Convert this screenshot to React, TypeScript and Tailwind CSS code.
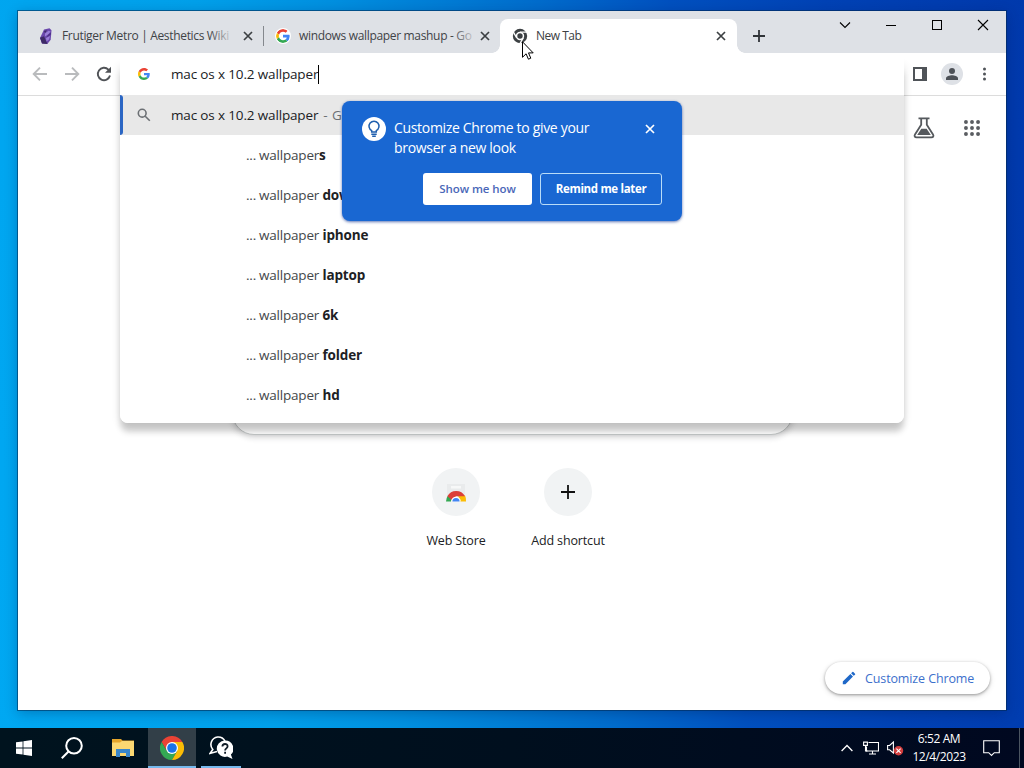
import type { ReactNode } from "react";
import clsx from "clsx";

const suggestions = [
  { text: "wallpaper", bold: "s" },
  { text: "wallpaper ", bold: "download" },
  { text: "wallpaper ", bold: "iphone" },
  { text: "wallpaper ", bold: "laptop" },
  { text: "wallpaper ", bold: "6k" },
  { text: "wallpaper ", bold: "folder" },
  { text: "wallpaper ", bold: "hd" },
];

function GoogleIcon({ className }: { className?: string }) {
  return (
    <svg viewBox="0 0 48 48" className={className}>
      <path fill="#ea4335" d="M24 9.5c3.54 0 6.71 1.22 9.21 3.6l6.85-6.85C35.9 2.38 30.47 0 24 0 14.62 0 6.51 5.38 2.56 13.22l7.98 6.19C12.43 13.72 17.74 9.5 24 9.5z" />
      <path fill="#4285f4" d="M46.98 24.55c0-1.57-.15-3.09-.38-4.55H24v9.02h12.94c-.58 2.96-2.26 5.48-4.78 7.18l7.73 6c4.51-4.18 7.09-10.36 7.09-17.65z" />
      <path fill="#fbbc05" d="M10.53 28.59A14.5 14.5 0 0 1 9.77 24c0-1.6.27-3.14.76-4.59l-7.98-6.19A23.9 23.9 0 0 0 0 24c0 3.87.92 7.53 2.56 10.78l7.97-6.19z" />
      <path fill="#34a853" d="M24 48c6.48 0 11.93-2.13 15.89-5.81l-7.73-6c-2.15 1.45-4.92 2.3-8.16 2.3-6.26 0-11.57-4.22-13.47-9.91l-7.98 6.19C6.51 42.62 14.62 48 24 48z" />
    </svg>
  );
}

function FrutigerIcon() {
  return (
    <svg viewBox="0 0 16 16" className="size-4">
      <path fill="#6a48ac" d="M6 1.5 11.5.3l2 1.9-.8 9.6-3.4 4.2-5.3-.4L2 10z" />
      <path fill="#3d2a66" d="m2 9.8 4-1.6 3.5 7.8-5.5-.4zM6 3l3-.7-2 3z" />
      <path fill="#9a7fd8" d="m7 5.5 3.6-2.7 2 .6-2.2 2.9L7 8.5zM8 10l4-2-1 3.6-2.5 1.8z" />
      <path fill="#4d3088" d="m10 6.8 3-2.2-.3 2.2-4.2 2.6z" />
    </svg>
  );
}

function GrayChromeIcon() {
  return (
    <svg viewBox="0 0 16 16" className="size-4">
      <circle cx="8" cy="8" r="7.2" fill="#3c4043" />
      <g stroke="#fff" strokeWidth="1.3">
        <path d="M8 4.2h7.5M4.7 9.9 1 3.4M11.3 9.9 7.6 16.2" />
      </g>
      <circle cx="8" cy="8" r="4.2" fill="#fff" />
      <circle cx="8" cy="8" r="2.7" fill="#3c4043" />
    </svg>
  );
}

function ChromeIcon() {
  return (
    <svg viewBox="0 0 24 24" className="size-6">
      <path fill="#ea4335" d="M12 6h10.4A12 12 0 0 0 1.6 6l5.2 9z" />
      <path fill="#34a853" d="M1.6 6A12 12 0 0 0 12 24l5.2-9L12 12l-5.2 3z" />
      <path fill="#fbbc05" d="M12 24A12 12 0 0 0 22.4 6H12l5.2 9z" />
      <circle cx="12" cy="12" r="6" fill="#fff" />
      <circle cx="12" cy="12" r="4.8" fill="#1a73e8" />
    </svg>
  );
}

function CloseIcon({ className }: { className?: string }) {
  return (
    <svg viewBox="0 0 10 10" className={clsx("size-2.5 shrink-0", className)} fill="none" stroke="currentColor" strokeWidth="1.7">
      <path d="m1 1 8 8M9 1 1 9" />
    </svg>
  );
}

function Tab({ icon, title, className }: { icon: ReactNode; title: string; className?: string }) {
  return (
    <div className={clsx("relative flex h-[34px] items-center pr-[10px]", className)}>
      {icon}
      <div className="relative ml-2 whitespace-nowrap text-[12px] tracking-[-0.33px] text-[#3f4347]">
        {title}
        <div className="absolute inset-y-0 right-0 w-5 bg-linear-to-r from-[#dee1e6]/0 to-[#dee1e6]/80" />
      </div>
      <CloseIcon className="ml-auto text-[#3c4043]" />
    </div>
  );
}

function WindowButton({ children }: { children: ReactNode }) {
  return (
    <div className="flex w-[46px] justify-center">
      <svg viewBox="0 0 12 12" className="size-3" fill="none" stroke="#000" strokeWidth="1.1">
        {children}
      </svg>
    </div>
  );
}

function TabStrip() {
  return (
    <div className="flex h-[42px] bg-[#dee1e6] pl-2 pt-2">
      <Tab icon={<FrutigerIcon />} title="Frutiger Metro | Aesthetics Wiki" className="w-[237px] pl-3" />
      <div className="mt-[7px] h-5 w-px bg-[#84888d]" />
      <Tab
        icon={<GoogleIcon className="mx-px size-3.5 rounded-full bg-white ring-1 ring-white" />}
        title="windows wallpaper mashup - Go"
        className="w-[236px] pl-[11px]"
      />
      <div className="relative flex h-[34px] w-[237px] items-center rounded-t-lg bg-white pl-3 pr-[11px]">
        <GrayChromeIcon />
        <span className="ml-2 text-[12px] tracking-[-0.5px] text-[#3c4043]">New Tab</span>
        <CloseIcon className="ml-auto text-[#3c4043]" />
        <div className="absolute -left-2 bottom-0 size-2 bg-[radial-gradient(circle_at_0_0,transparent_7.5px,white_8px)]" />
        <div className="absolute -right-2 bottom-0 size-2 bg-[radial-gradient(circle_at_100%_0,transparent_7.5px,white_8px)]" />
      </div>
      <svg viewBox="0 0 12 12" className="ml-4 mt-[11px] size-3 text-[#303438]" stroke="currentColor" strokeWidth="1.8">
        <path d="M6 0v12M0 6h12" />
      </svg>
      <div className="ml-auto flex h-3">
        <WindowButton><path d="m1 3.5 5 5 5-5" /></WindowButton>
        <WindowButton><path d="M1 6.5h10" shapeRendering="crispEdges" /></WindowButton>
        <WindowButton><path d="M1.5 1.5h9v9h-9z" shapeRendering="crispEdges" /></WindowButton>
        <WindowButton><path d="m1 1 10 10M11 1 1 11" /></WindowButton>
      </div>
    </div>
  );
}

function Toolbar() {
  return (
    <div className="flex h-[43px] items-center border-b border-[#dcdcdc] bg-white">
      <div className="flex items-center gap-4 pl-[14px]">
        <svg viewBox="0 0 16 16" className="size-4" fill="none" stroke="#b9bbbd" strokeWidth="1.9">
          <path d="M15 8H2.2M8 1.7 1.7 8 8 14.3" />
        </svg>
        <svg viewBox="0 0 16 16" className="size-4" fill="none" stroke="#b9bbbd" strokeWidth="1.9">
          <path d="M1 8h12.8M8 1.7 14.3 8 8 14.3" />
        </svg>
        <svg viewBox="0 0 16 16" className="size-4" fill="none" stroke="#505357" strokeWidth="1.9">
          <path d="M14 9.6A6.2 6.2 0 1 1 12.4 3.6L14 5.2" />
          <path d="M15 .8v6H9z" fill="#505357" stroke="none" />
        </svg>
      </div>
      <div className="ml-auto flex items-center pr-[14px]">
        <svg viewBox="0 0 14 14" className="size-3.5">
          <path fill="#4f5358" fillRule="evenodd" d="M0 0h14v14H0zm2 2v10h7V2z" />
        </svg>
        <div className="ml-[14px] flex size-[22px] items-center justify-center rounded-full bg-[#dee1e6]">
          <svg viewBox="0 0 12 12" className="size-3" fill="#4d5157">
            <circle cx="6" cy="3" r="3" />
            <path d="M0 12V10.3C0 8.2 3.6 7.3 6 7.3s6 .9 6 3V12z" />
          </svg>
        </div>
        <svg viewBox="0 0 14 14" className="ml-[15px] size-3.5" fill="#4f5358">
          <circle cx="6.5" cy="2" r="1.5" />
          <circle cx="6.5" cy="7" r="1.5" />
          <circle cx="6.5" cy="12" r="1.5" />
        </svg>
      </div>
    </div>
  );
}

function Omnibox() {
  return (
    <div className="absolute left-[102px] top-[42px] h-[370px] w-[784px] overflow-hidden rounded-b-lg bg-white text-[13.5px] tracking-[-0.15px] text-[#202124]">
      <div className="flex h-[42px] items-center pl-[18px]">
        <GoogleIcon className="size-3" />
        <span className="ml-[21px]">mac os x 10.2 wallpaper</span>
        <span className="h-[19px] w-px bg-black" />
      </div>
      <div className="flex h-10 items-center bg-[#e8e8e8]">
        <div className="h-full w-[3px] rounded-r bg-[#2b66c4]" />
        <svg viewBox="0 0 14 14" className="ml-[14px] size-3.5" fill="none" stroke="#6c7074" strokeWidth="1.6">
          <circle cx="5.2" cy="5.2" r="3.9" />
          <path d="m8.2 8.2 4.6 4.6" />
        </svg>
        <span className="ml-5">mac os x 10.2 wallpaper</span>
        <span className="whitespace-pre pl-px tracking-[0.5px] text-[#6a6e73]"> - Google Search</span>
      </div>
      {suggestions.map((item) => (
        <div key={item.bold} className="flex h-10 items-center whitespace-pre pl-[126px] tracking-[-0.2px]">
          <span className="w-[13px] text-[#44474a]">...</span>
          <span className="text-[#44474a]">{item.text}</span>
          <span className="font-bold tracking-[-0.12px]">{item.bold}</span>
        </div>
      ))}
    </div>
  );
}

function NewTabPage() {
  return (
    <div className="relative flex flex-1 flex-col items-center bg-white">
      <div className="flex w-full justify-end gap-[29px] pr-[26px] pt-[21px]">
        <svg viewBox="0 0 22 22" className="size-[22px]" fill="none" stroke="#55595d" strokeWidth="1.8">
          <path d="M5.5 1.4h11M8.2 1.4v6.4L2 17.4c-1 1.7-.2 3 1.6 3h14.8c1.8 0 2.6-1.3 1.6-3l-6.2-9.6V1.4" />
          <path d="M8.3 11.8h5.4l4.1 6.3H4.2z" fill="#55595d" stroke="none" />
        </svg>
        <svg viewBox="0 0 18 18" className="mt-[3px] size-4" fill="#5a5d61">
          {[2.2, 9, 15.8].map((y) => [2.2, 9, 15.8].map((x) => <circle key={`${x}-${y}`} cx={x} cy={y} r="2.2" />))}
        </svg>
      </div>
      <div className="mt-[252px] h-11 w-[561px] rounded-full border border-[#c2c6c6] bg-white shadow-[0_2px_6px_rgba(32,33,36,0.22)]" />
      <div className="mt-[33px] flex text-[12.5px] text-[#202124]">
        <div className="flex w-28 flex-col items-center">
          <div className="flex size-12 items-center justify-center rounded-full bg-[#f1f3f4] pt-1">
            <svg viewBox="0 0 24 24" className="size-6">
              <path fill="#e9ebec" d="M3 2h18v17H3z" />
              <path fill="#f7f8f8" d="M7 4h10v2.5H7z" />
              <path fill="#34a853" d="M2 19.5a10 10 0 0 1 2-6l4 2-1 4z" />
              <path fill="#fbbc05" d="M14 13.5h7a10 10 0 0 1 1 6h-6z" />
              <path fill="#dc3f38" d="M3.4 14.2a10 10 0 0 1 17.6 0h-9l-4 4z" />
              <path fill="#fff" d="M7.2 19.5a4.8 4.8 0 0 1 9.6 0z" />
              <path fill="#4285f4" d="M8.4 19.5a3.6 3.6 0 0 1 7.2 0z" />
            </svg>
          </div>
          <span className="mt-4 tracking-[-0.15px]">Web Store</span>
        </div>
        <div className="flex w-28 flex-col items-center">
          <div className="flex size-12 items-center justify-center rounded-full bg-[#f1f3f4]">
            <svg viewBox="0 0 14 14" className="size-3.5" stroke="#111" strokeWidth="1.8">
              <path d="M7 0v14M0 7h14" />
            </svg>
          </div>
          <span className="mt-4 tracking-[-0.15px]">Add shortcut</span>
        </div>
      </div>
      <button className="absolute bottom-4 right-4 flex h-8 w-[165px] items-center rounded-full bg-white pl-[17px] text-[12.5px] tracking-[-0.12px] text-[#3c70cc] shadow-[0_1px_3px_rgba(0,0,0,0.35),0_2px_6px_rgba(0,0,0,0.12)]">
        <svg viewBox="0 0 14 14" className="size-3.5" fill="#1f68c8">
          <path d="M.8 10.6v2.6h2.6l7.6-7.6L8.4 3zM13 3.7a.7.7 0 0 0 0-1L11.4 1a.7.7 0 0 0-1 0L9.1 2.2l2.6 2.6z" />
        </svg>
        <span className="ml-[9px] mt-[3px] whitespace-nowrap">Customize Chrome</span>
      </button>
    </div>
  );
}

function CustomizePromo() {
  return (
    <div className="absolute left-[324px] top-[90px] h-[120px] w-[340px] rounded-lg bg-[#1967d2] pl-5 pr-5 pt-4 text-white shadow-[0_1px_3px_rgba(25,60,150,0.7)]">
      <div className="flex">
        <div className="flex size-6 items-center justify-center rounded-full bg-white">
          <svg viewBox="0 0 16 18" className="h-[18px] w-4" fill="none" stroke="#1f5fae" strokeWidth="1.5">
            <path d="M5.7 12v-1.4a5 5 0 1 1 4.6 0V12z" />
            <path d="M5.3 14.2h5.4M6.2 16.3h3.6" />
          </svg>
        </div>
        <p className="ml-2 mt-px w-[220px] text-[14px] leading-5 tracking-[-0.32px]">
          Customize Chrome to give your
          <br />
          browser a new look
        </p>
        <CloseIcon className="ml-auto mr-[7px] mt-[7px]" />
      </div>
      <div className="mt-[15px] flex justify-end gap-2 text-[11.5px]">
        <button className="h-8 w-[109px] rounded-[3px] bg-white font-semibold tracking-[-0.08px] text-[#4a67b8]">Show me how</button>
        <button className="h-8 w-[122px] rounded-[3px] border border-[#b9dcf8] font-bold tracking-[-0.33px]">Remind me later</button>
      </div>
    </div>
  );
}

function Taskbar() {
  return (
    <div className="flex h-10 bg-linear-to-r from-[#00131e] via-[#000f1e] to-[#000820] text-white">
      <div className="flex w-12 items-center justify-center">
        <svg viewBox="0 0 16 16" className="size-4" fill="#fff">
          <path d="M0 2.3 6.6 1.4v6.1H0zM7.4 1.3 16 0v7.5H7.4zM0 8.4h6.6v6.2L0 13.7zM7.4 8.4H16V16l-8.6-1.3z" />
        </svg>
      </div>
      <div className="flex w-12 items-center justify-center">
        <svg viewBox="0 0 22 22" className="size-[22px]" fill="none" stroke="#fff" strokeWidth="2">
          <circle cx="13" cy="8.8" r="7.8" />
          <path d="M7.5 14.5.8 21.2" />
        </svg>
      </div>
      <div className="flex w-[52px] items-center justify-center pl-0.5">
        <svg viewBox="0 0 22 18" className="mb-px h-[18px] w-[22px]">
          <path fill="#e5a52b" d="M0 0h9l1.5 1.5H22V17H0z" />
          <path fill="#fcd872" d="M0 3.5h8L10 2h12v15H0z" />
          <path fill="#3a87cb" d="M4 10h14v8h-4v-4H8v4H4z" />
        </svg>
      </div>
      <div className="flex w-12 flex-col items-center border-b-2 border-[#76b9ed] bg-[#323f48] pt-2">
        <ChromeIcon />
      </div>
      <div className="ml-[5px] flex w-10 flex-col items-center border-b-2 border-[#76b9ed] pt-2">
        <svg viewBox="0 0 24 24" className="size-6">
          <path fill="none" stroke="#fff" strokeWidth="1.6" d="M8 15.5 1 17.5l2.8-4A7.6 7.6 0 0 1 8.6 1a7.6 7.6 0 0 1 7.3 4" />
          <path fill="#fff" d="M16 4.5a8.2 8.2 0 1 0 2.2 16.1L23.5 23l-1.6-4.4A8.2 8.2 0 0 0 16 4.5z" />
          <path fill="none" stroke="#111d28" strokeWidth="1.8" d="M13.4 10.5c0-3.3 5.2-3.3 5.2-.2 0 2-2.5 2.1-2.5 4.1M16.1 15.7v2" />
        </svg>
      </div>
      <div className="ml-auto flex items-center">
        <svg viewBox="0 0 12 8" className="h-2 w-3" fill="none" stroke="#fff" strokeWidth="1.3">
          <path d="M.6 7 6 1.5 11.4 7" />
        </svg>
        <svg viewBox="0 0 16 14" className="ml-[10px] h-3.5 w-4" fill="none" stroke="#fff" strokeWidth="1.1">
          <path d="M5.5 1.5h10v8.5h-12V5.5M9.5 10v3M6 13h7" />
          <path d="M.6 1.1h3.8v3.3H.6zM2.5 4.5V10h2" />
        </svg>
        <svg viewBox="0 0 18 16" className="ml-2 h-4 w-[18px]">
          <path fill="none" stroke="#fff" strokeWidth="1.1" d="M.6 5.5h2L6.4 2v11L2.6 9.8h-2z" />
          <circle cx="11.5" cy="10.7" r="4.7" fill="#d13d3d" />
          <path stroke="#fff" strokeWidth="1.1" d="m9.4 8.6 4.2 4.2m0-4.2-4.2 4.2" />
        </svg>
        <div className="ml-[5px] flex w-[58px] flex-col items-center whitespace-nowrap text-[12px] leading-[18px] tracking-[-0.4px]">
          <span>6:52 AM</span>
          <span>12/4/2023</span>
        </div>
        <svg viewBox="0 0 17 17" className="ml-[15px] size-[17px]" fill="none" stroke="#fff" strokeWidth="1.1">
          <path d="M.7.7h15.6v12h-5L8.5 15.5l-2.8-2.8h-5z" />
        </svg>
        <div className="ml-[19px] mr-1 h-full w-px bg-[#4b5561]" />
      </div>
    </div>
  );
}

export default function App() {
  return (
    <div className="relative flex h-[768px] w-[1024px] flex-col overflow-hidden bg-[linear-gradient(84deg,#00a8f2_0%,#00a0ea_25%,#0090e0_37%,#006ccc_56%,#0050bf_68%,#0042b5_82%,#0039ac_100%)] font-['Open_Sans','Noto_Sans',sans-serif]">
      <div className="flex h-[728px] pl-[18px] pt-[11px]">
        <div className="relative flex h-[699px] w-[988px] flex-col shadow-[0_0_0_1px_rgba(0,40,80,0.55),0_3px_12px_rgba(0,20,70,0.3)]">
          <TabStrip />
          <Toolbar />
          <NewTabPage />
          {/* shadow sits below the toolbar so the input row blends into it */}
          <div className="absolute left-[102px] top-[52px] h-[360px] w-[784px] rounded-b-lg shadow-[0_10px_6px_-1px_rgba(0,0,0,0.17),0_3px_10px_rgba(0,0,0,0.12)]" />
          <Omnibox />
          <CustomizePromo />
        </div>
      </div>
      <Taskbar />
      <svg viewBox="0 0 12 19" className="absolute left-[522px] top-[41px] h-[19px] w-3" fill="#fff" stroke="#000" strokeWidth="1">
        <path d="M.5.8v15.5l3.6-3.5 2.3 5.4 2.4-1-2.3-5.3h4.7z" />
      </svg>
    </div>
  );
}
